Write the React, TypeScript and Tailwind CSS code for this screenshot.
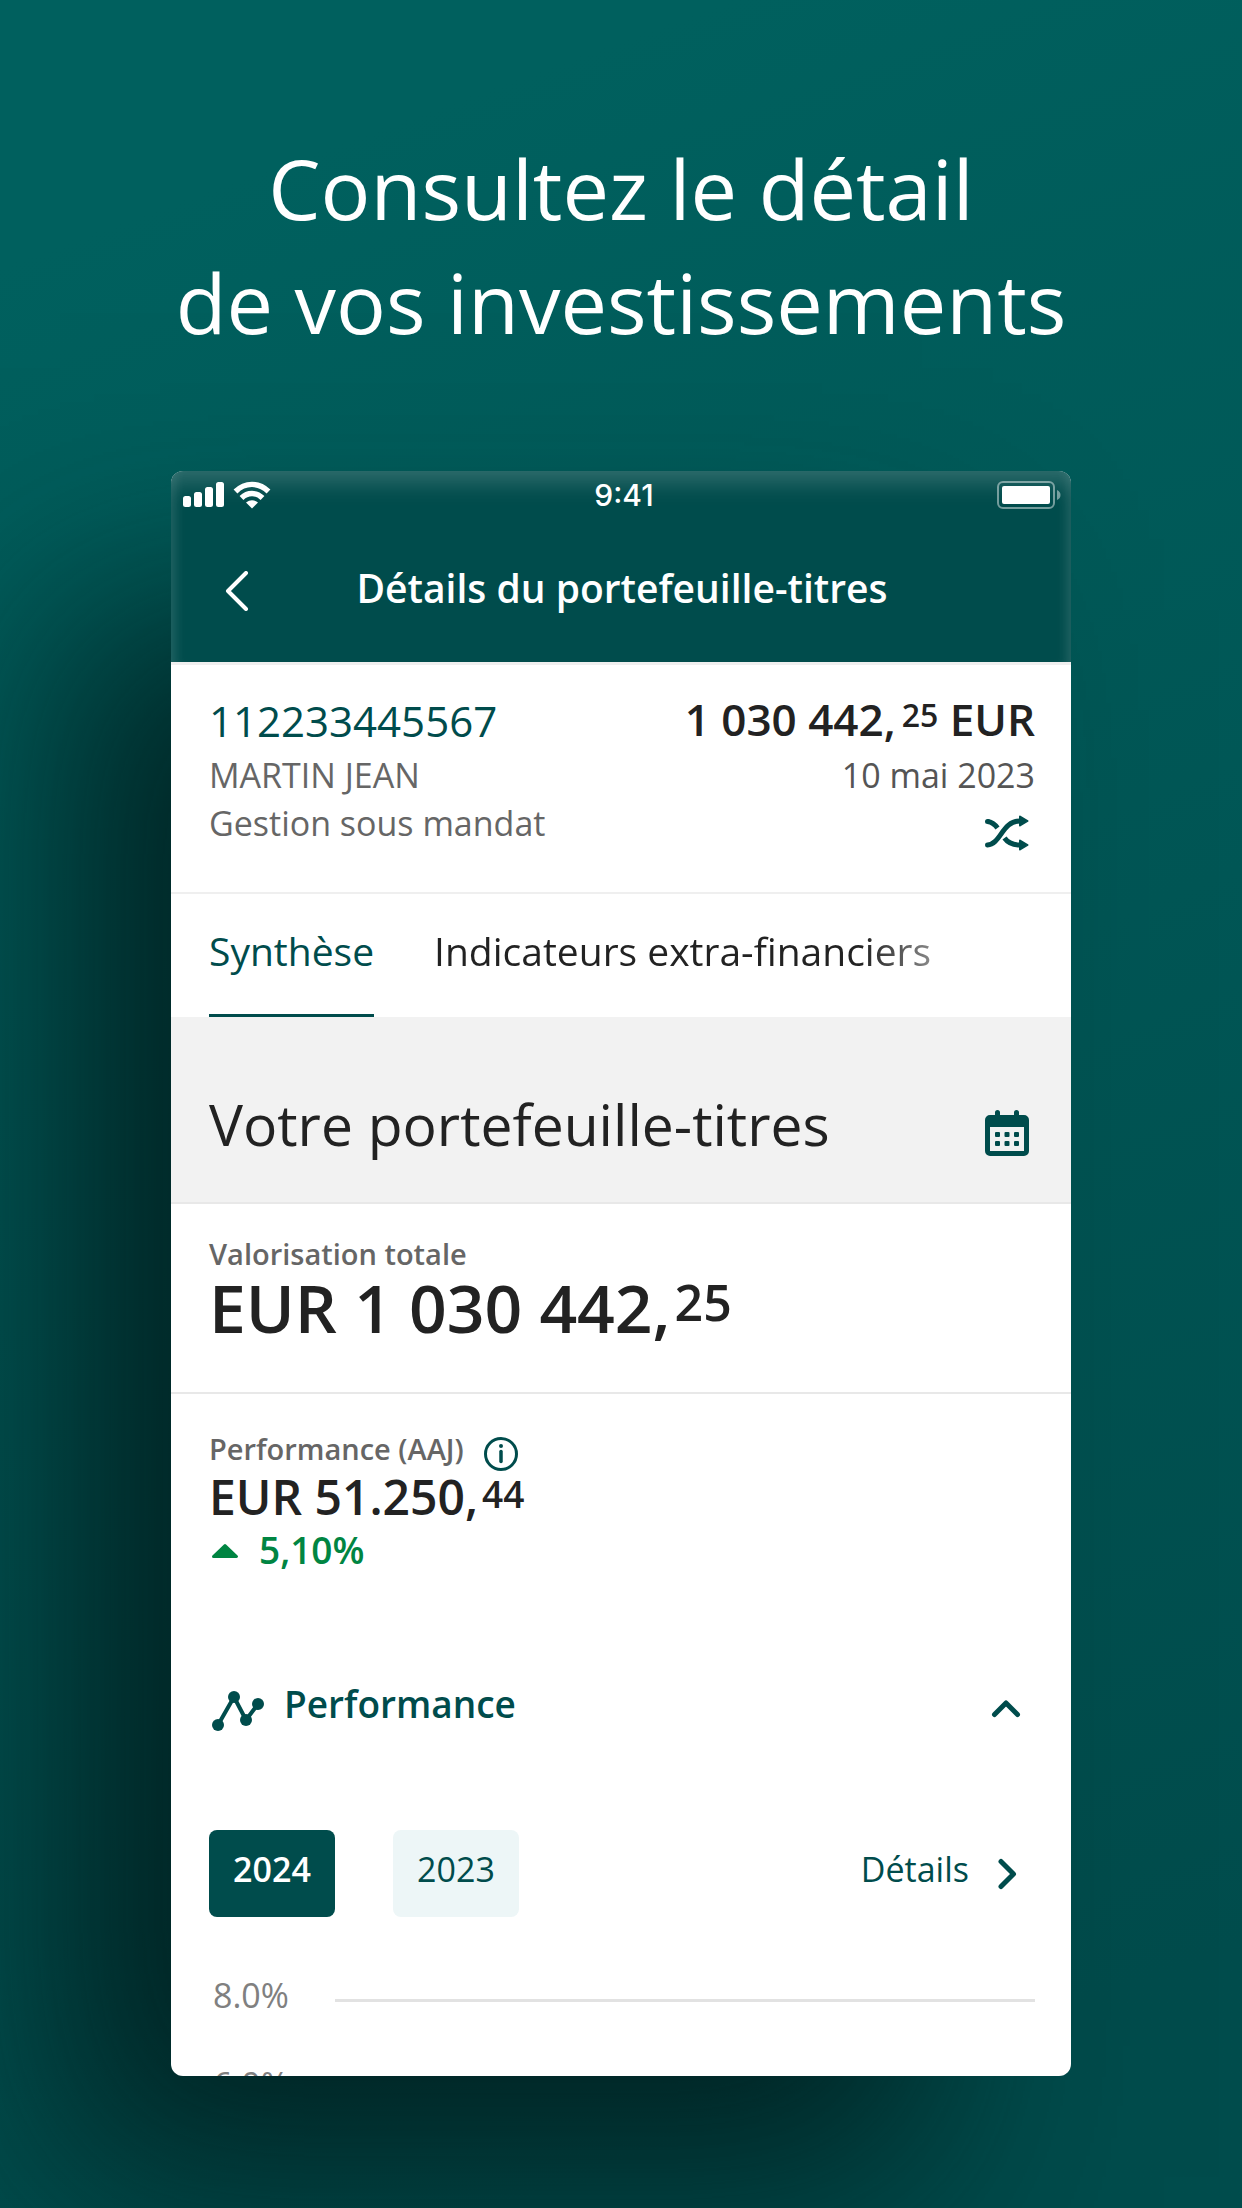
import React, { useState } from "react";

const years = ["2024", "2023"];
const ticks = ["8.0%", "6.0%"];

function StatusBar() {
  return (
    <div className="grid grid-cols-3 items-center h-12 pl-3 pr-2.5">
      <div className="flex items-center gap-2">
        <svg width="42" height="26" viewBox="0 0 42 26" fill="currentColor">
          <rect x="0" y="14" width="8" height="11" rx="2.5" />
          <rect x="11" y="10" width="8" height="15" rx="2.5" />
          <rect x="22" y="5" width="8" height="20" rx="2.5" />
          <rect x="33" y="0" width="8" height="25" rx="2.5" />
        </svg>
        <svg width="38" height="28" viewBox="0 0 38 28" fill="none" stroke="currentColor" strokeWidth="5.4">
          <path d="M2.5 10.5C12 1 26 1 35.500 10.500" />
          <path d="M8.500 17C14.500 11 23.500 11 29.500 17" />
          <path d="M13 21.500Q19 17 25 21.500L19 27.500Z" fill="currentColor" stroke="none" />
        </svg>
      </div>
      <span className="justify-self-center pl-1 font-['Inter'] font-medium text-[30px] leading-9">9:41</span>
      <svg className="justify-self-end" width="64" height="28" viewBox="0 0 64 28" fill="none">
        <rect x="1" y="1" width="56" height="26" rx="5" stroke="white" strokeOpacity="0.45" strokeWidth="2" />
        <rect x="5" y="5" width="48" height="18" rx="2" fill="white" />
        <path d="M60 9C62.500 10 63.500 12 63.500 14S62.500 18 60 19Z" fill="white" fillOpacity="0.45" />
      </svg>
    </div>
  );
}

function ShuffleIcon() {
  return (
    <svg width="44" height="36" viewBox="0 0 44 36" fill="none" stroke="currentColor" strokeWidth="5" strokeLinecap="round">
      <path d="M2.500 30C16 29 17 6 35 6" />
      <path d="M2.500 6.500C7 7 10 9.500 12.500 13" strokeLinecap="butt" />
      <path d="M2.500 6.500H3" />
      <path d="M19.500 23C23 28 28 30 35 30" strokeLinecap="butt" />
      <path d="M35 1.500L42.500 6L35 10.500Z" fill="currentColor" strokeWidth="2" strokeLinejoin="round" />
      <path d="M35 25.500L42.500 30L35 34.500Z" fill="currentColor" strokeWidth="2" strokeLinejoin="round" />
    </svg>
  );
}

function CalendarIcon() {
  return (
    <svg width="44" height="46" viewBox="0 0 44 46">
      <path
        fill="currentColor"
        fillRule="evenodd"
        d="M10 2.500a2.500 2.500 0 0 1 5 0V5h14V2.500a2.500 2.500 0 0 1 5 0V5h5a5 5 0 0 1 5 5v31a5 5 0 0 1-5 5H5a5 5 0 0 1-5-5V10a5 5 0 0 1 5-5h5ZM5 17v24h34V17Z"
      />
      <g fill="currentColor">
        <rect x="10" y="22" width="5" height="5" rx="1" />
        <rect x="19.500" y="22" width="5" height="5" rx="1" />
        <rect x="29" y="22" width="5" height="5" rx="1" />
        <rect x="10" y="31" width="5" height="5" rx="1" />
        <rect x="19.500" y="31" width="5" height="5" rx="1" />
        <rect x="29" y="31" width="5" height="5" rx="1" />
      </g>
    </svg>
  );
}

function ChartIcon() {
  return (
    <svg width="52" height="40" viewBox="0 0 52 40" fill="currentColor">
      <path d="M6 34L22 6L34 29L46 13" fill="none" stroke="currentColor" strokeWidth="4" />
      <circle cx="6" cy="34" r="6" />
      <circle cx="22" cy="6" r="6" />
      <circle cx="34" cy="29" r="6" />
      <circle cx="46" cy="13" r="6" />
    </svg>
  );
}

export default function App() {
  const [year, setYear] = useState("2024");
  const [open, setOpen] = useState(true);

  return (
    <main className="min-h-screen overflow-hidden bg-linear-160 from-[#00605e] from-10% to-[#004c4c] to-90% px-8 pt-[131px] pb-[132px] font-['Open_Sans',sans-serif] text-[#222]">
      <h1 className="text-center text-white text-[83px] leading-[114px] mb-28">
        Consultez le détail
        <br />
        de vos investissements
      </h1>

      <div className="mx-auto w-full max-w-[900px] rounded-xl bg-white shadow-[-130px_120px_200px_-20px_rgba(0,24,24,0.8)] overflow-hidden">
        {/* Header */}
        <header className="bg-[#004c4c] text-white shadow-[inset_0_20px_24px_-10px_rgba(255,255,255,0.2),inset_12px_0_12px_-8px_rgba(255,255,255,0.1),inset_-12px_0_12px_-8px_rgba(255,255,255,0.1)]">
          <StatusBar />
          <div className="grid grid-cols-[56px_1fr_56px] items-center h-[143px] pl-[38px] pr-9">
            <button type="button" aria-label="Retour" className="justify-self-center">
              <svg width="24" height="40" viewBox="0 0 24 40" fill="none" stroke="currentColor" strokeWidth="4" strokeLinecap="round" strokeLinejoin="round">
                <path d="M21 2L3 20L21 38" />
              </svg>
            </button>
            <h2 className="text-center font-semibold text-[39px] leading-12 pb-1.5">Détails du portefeuille-titres</h2>
          </div>
        </header>

        {/* Account */}
        <section className="flex justify-between border-t-3 border-b-2 border-[#efefef] pl-[38px] pr-9 pt-[26px] pb-[41px]">
          <div className="text-[34px] leading-12 text-[#666]">
            <p className="text-[42px] leading-15 text-[#004c4c]">112233445567</p>
            <p>MARTIN JEAN</p>
            <p>Gestion sous mandat</p>
          </div>
          <div className="flex flex-col items-end text-[34px] leading-12 text-[#555]">
            <p className="font-semibold text-[44px] leading-14 pb-1 text-[#222]">
              1 030 442,<span className="ml-1.5 text-[32px] leading-none align-[9px]">25</span> EUR
            </p>
            <p>10 mai 2023</p>
            <button type="button" aria-label="Changer de portefeuille" className="mt-4 mr-1.5 text-[#004c4c]">
              <ShuffleIcon />
            </button>
          </div>
        </section>

        {/* Tabs */}
        <nav className="flex gap-15 pl-[38px] pr-9 text-[39px] leading-12">
          <button type="button" className="h-[123px] pb-1.5 border-b-3 border-[#004c4c] text-[#004c4c]">Synthèse</button>
          <button type="button" className="h-[123px] pb-1.5 border-b-3 border-transparent bg-linear-to-r from-[#222] from-86% to-[#888] bg-clip-text text-transparent whitespace-nowrap">
            Indicateurs extra-financiers
          </button>
        </nav>

        <section className="flex items-end justify-between bg-[#f2f2f2] border-b-2 border-[#e8e8e8] pl-[38px] pr-9 pt-[75px] pb-[46px]">
          <h3 className="text-[57px] leading-16">Votre portefeuille-titres</h3>
          <button type="button" aria-label="Choisir une date" className="mr-1.5 text-[#004c4c]">
            <CalendarIcon />
          </button>
        </section>

        <section className="border-b-2 border-[#e8e8e8] pl-[38px] pr-9 pt-8 pb-[50px] font-semibold">
          <p className="text-[29px] leading-9 text-[#666]">Valorisation totale</p>
          <p className="text-[66px] leading-[70px]">
            EUR 1 030 442,<span className="ml-1 text-[50px] leading-none align-[12px]">25</span>
          </p>
        </section>

        <section className="pl-[38px] pr-9 pt-[37px] font-semibold">
          <div className="flex items-center gap-5 h-9">
            <p className="text-[29px] leading-9 text-[#666]">Performance (AAJ)</p>
            <button type="button" aria-label="Information" className="pt-2.5 text-[#004c4c]">
              <svg width="34" height="34" viewBox="0 0 34 34" fill="none" stroke="currentColor">
                <circle cx="17" cy="17" r="15.500" strokeWidth="3" />
                <path d="M17 14.500V24.500" strokeWidth="3.500" strokeLinecap="round" />
                <circle cx="17" cy="9" r="2" fill="currentColor" stroke="none" />
              </svg>
            </button>
          </div>
          <p className="text-[48px] leading-15">
            EUR 51.250,<span className="ml-1 text-[37px] leading-none align-[7px]">44</span>
          </p>
          <p className="flex items-center gap-5 text-[37px] leading-[46px] text-[#008542]">
            <svg width="30" height="18" viewBox="0 0 30 18" fill="currentColor" stroke="currentColor" strokeWidth="3" strokeLinejoin="round">
              <path d="M4.500 15.500L16 4.500L27.500 15.500Z" />
            </svg>
            5,10%
          </p>
        </section>

        {/* Performance */}
        <section className="pl-[38px] pr-9 pt-26">
          <button
            type="button"
            aria-expanded={open}
            onClick={() => setOpen(!open)}
            className="flex w-full items-end gap-5 pl-[3px] pr-3.5 text-[#004c4c]"
          >
            <ChartIcon />
            <span className="flex-1 text-left font-semibold text-[37px] leading-[54px]">Performance</span>
            <svg width="30" height="44" viewBox="0 0 30 44" fill="none" stroke="currentColor" strokeWidth="5" strokeLinecap="round" strokeLinejoin="round">
              <path d="M3.500 27.500L15 16L26.500 27.500" />
            </svg>
          </button>

          <div className="flex items-center pt-[99px] text-[34px] leading-12 text-[#004c4c]">
            <div className="flex gap-[58px]">
              {years.map((y) => (
                <button
                  key={y}
                  type="button"
                  aria-pressed={y === year}
                  onClick={() => setYear(y)}
                  className={
                    y === year
                      ? "w-[126px] h-[87px] pb-2.5 rounded-lg bg-[#004c4c] text-white font-semibold"
                      : "w-[126px] h-[87px] pb-2.5 rounded-lg bg-[#edf6f7]"
                  }
                >
                  {y}
                </button>
              ))}
            </div>
            <a href="#details" className="ml-auto flex items-center gap-7 pr-[18px]">
              <span className="pb-2.5">Détails</span>
              <svg width="20" height="32" viewBox="0 0 20 32" fill="none" stroke="currentColor" strokeWidth="5" strokeLinecap="round" strokeLinejoin="round">
                <path d="M4 3.500L16.500 16L4 28.500" />
              </svg>
            </a>
          </div>

          <div className="mt-[55px] flex h-26 flex-col gap-[33px] overflow-hidden">
            {ticks.map((tick) => (
              <div key={tick} className="flex shrink-0 items-center h-14 pl-1">
                <span className="w-[122px] pb-2.5 text-[34px] leading-[46px] text-[#808080]">{tick}</span>
                <div className="h-[3px] flex-1 bg-[#e2e2e2]" />
              </div>
            ))}
          </div>
        </section>
      </div>
    </main>
  );
}
